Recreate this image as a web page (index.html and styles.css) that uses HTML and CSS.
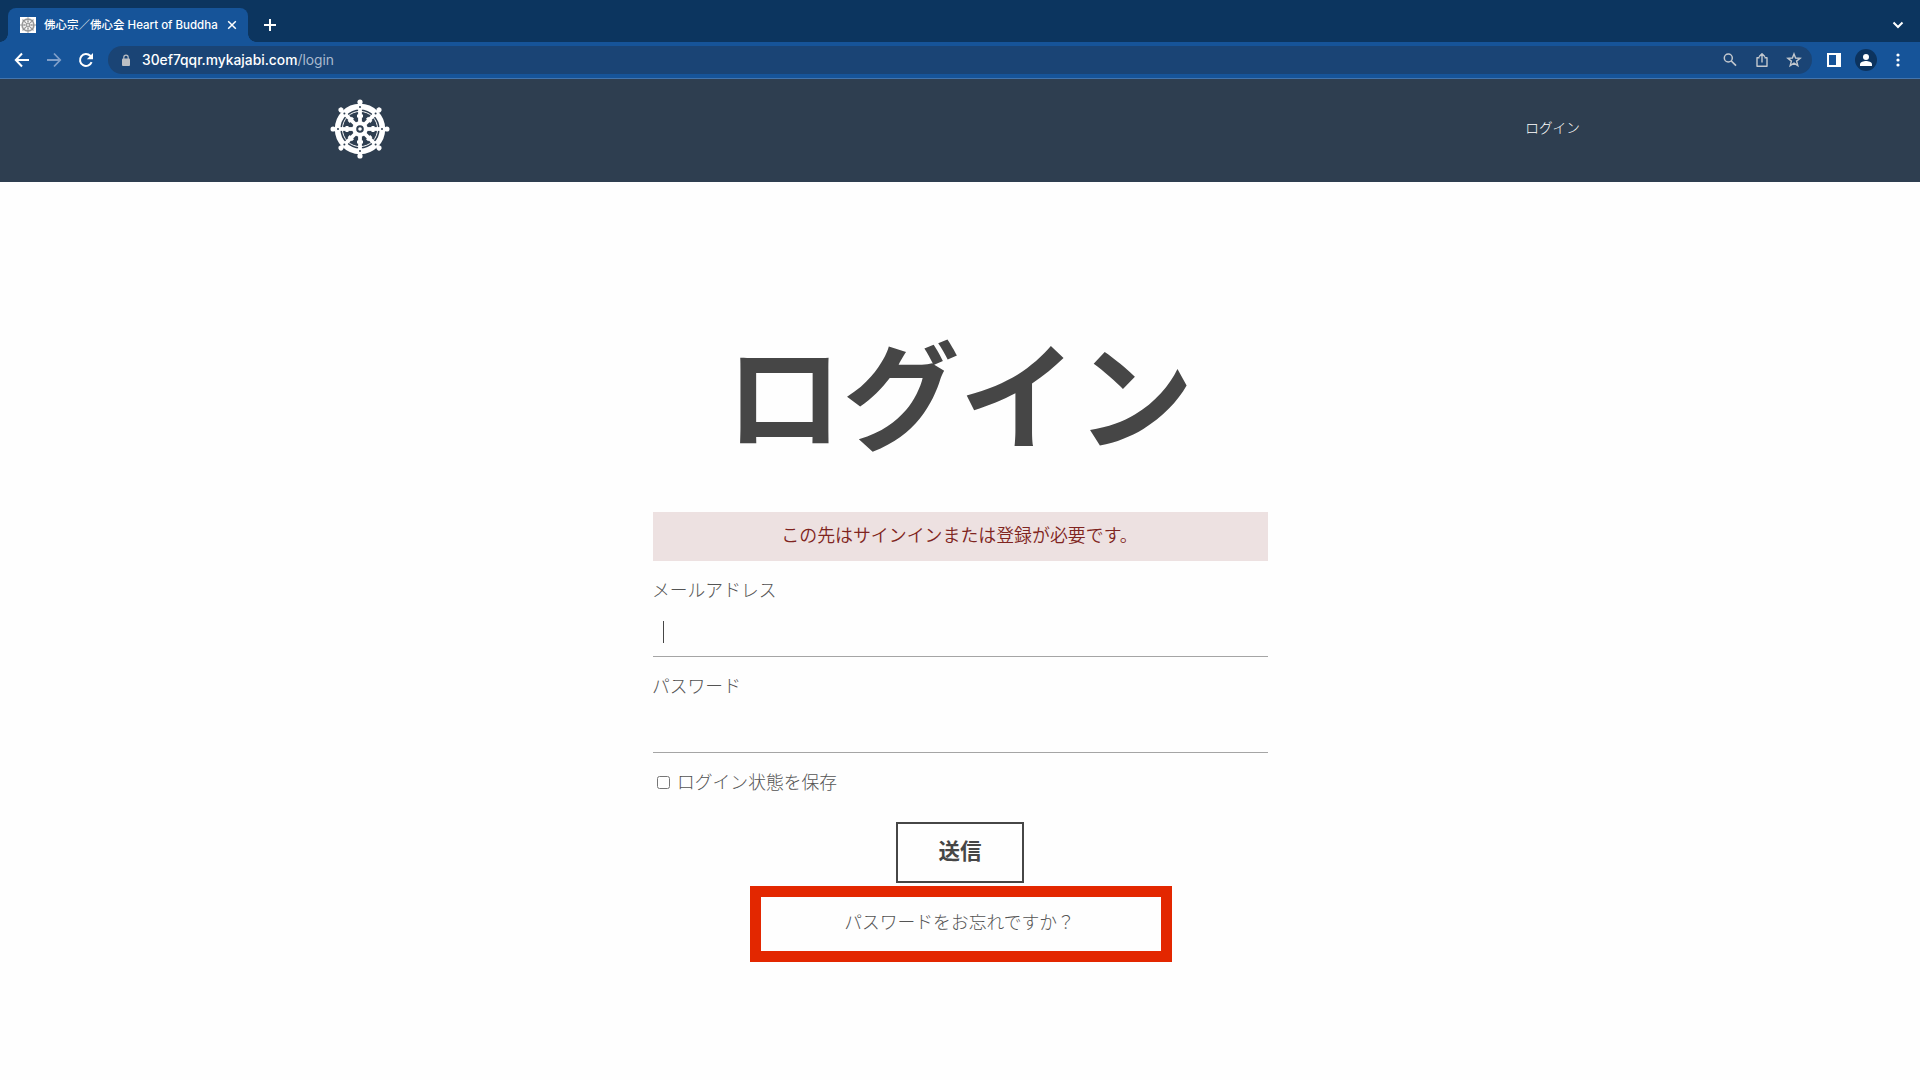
FILE: index.html
```html
<!DOCTYPE html>
<html lang="ja">

<head>
    <meta charset="UTF-8">
    <meta name="viewport" content="width=device-width, initial-scale=1.0">
    <title>佛心宗／佛心会 Heart of Buddha</title>
    <link rel="stylesheet" href="styles.css">
</head>

<body>
    <svg width="0" height="0" class="defs">
        <defs>
            <g id="spoke">
                <path d="M0 -6V-21" stroke-width="3.8" />
                <path d="M-3 -13H3" stroke-width="3" />
                <circle cx="0" cy="-26.9" r="2.6" fill="currentColor" stroke="none" />
            </g>
            <symbol id="wheel" viewBox="-30 -30 60 60">
                <g fill="none" stroke="currentColor">
                    <circle r="22.4" stroke-width="5.6" />
                    <circle r="17.6" stroke-width="1" />
                    <circle r="5.8" stroke-width="4" />
                    <circle r="1.8" fill="currentColor" stroke="none" />
                    <use href="#spoke" />
                    <use href="#spoke" transform="rotate(45)" />
                    <use href="#spoke" transform="rotate(90)" />
                    <use href="#spoke" transform="rotate(135)" />
                    <use href="#spoke" transform="rotate(180)" />
                    <use href="#spoke" transform="rotate(225)" />
                    <use href="#spoke" transform="rotate(270)" />
                    <use href="#spoke" transform="rotate(315)" />
                </g>
                <g class="rivets">
                    <circle cx="0" cy="-22" r="1" />
                    <circle cx="0" cy="22" r="1" />
                    <circle cx="-22" cy="0" r="1" />
                    <circle cx="22" cy="0" r="1" />
                    <circle cx="-15.6" cy="-15.6" r="1" />
                    <circle cx="15.6" cy="-15.6" r="1" />
                    <circle cx="-15.6" cy="15.6" r="1" />
                    <circle cx="15.6" cy="15.6" r="1" />
                </g>
            </symbol>
        </defs>
    </svg>

    <div class="tabstrip">
        <div class="tab">
            <svg class="favicon" width="16" height="16"><use href="#wheel" /></svg>
            <span class="tab-title">佛心宗／佛心会 Heart of Buddha</span>
            <svg class="tab-close" width="10" height="10" viewBox="0 0 10 10"><path d="M1.2 1.2L8.8 8.8M8.8 1.2L1.2 8.8" stroke="#fff" stroke-width="1.5" /></svg>
        </div>
        <svg class="tab-new" width="12" height="12" viewBox="0 0 12 12"><path d="M6 0V12M0 6H12" stroke="#fff" stroke-width="2" /></svg>
        <svg class="tab-menu" width="12" height="8" viewBox="0 0 12 8"><path d="M1.5 1.5L6 6L10.5 1.5" fill="none" stroke="#fff" stroke-width="2" /></svg>
    </div>

    <div class="toolbar">
        <div class="nav-buttons">
            <svg width="16" height="16" viewBox="0 0 16 16"><path d="M15 8H2.5M8 1.5L1.8 8L8 14.5" fill="none" stroke="#fff" stroke-width="2" /></svg>
            <svg width="16" height="16" viewBox="0 0 16 16"><path d="M1 8H13.5M8 1.5L14.2 8L8 14.5" fill="none" stroke="#7f9fc9" stroke-width="1.8" /></svg>
            <svg width="16" height="16" viewBox="0 0 16 16"><path d="M13.6 10.2A6 6 0 1 1 12.3 3.8L13.5 5" fill="none" stroke="#fff" stroke-width="2" /><path d="M15 1V7.2H8.8Z" fill="#fff" /></svg>
        </div>
        <div class="omnibox">
            <svg class="lock" width="10" height="13" viewBox="0 0 10 13"><rect x="1" y="4.5" width="8" height="7.5" rx="1" fill="#bcbfc4" /><path d="M2.8 5V3.4A2.2 2.2 0 0 1 7.2 3.4V5" fill="none" stroke="#bcbfc4" stroke-width="1.2" /></svg>
            <span class="url"><span class="host">30ef7qqr.mykajabi.com</span>/login</span>
            <div class="omnibox-icons">
                <svg width="16" height="16" viewBox="0 0 16 16"><circle cx="6.3" cy="6" r="4" fill="none" stroke="#c3c8ce" stroke-width="1.5" /><path d="M9.3 9L14 13.7" stroke="#c3c8ce" stroke-width="1.7" /></svg>
                <svg width="16" height="16" viewBox="0 0 16 16"><path d="M5.5 5.7H3V14.3H13V5.7H10.5M8 10.5V2M5 4.7L8 1.7L11 4.7" fill="none" stroke="#c3c8ce" stroke-width="1.4" stroke-linejoin="round" /></svg>
                <svg width="16" height="16" viewBox="0 0 16 16"><path d="M8 1.9L9.6 6L14.1 6.3L10.6 9.1L11.8 13.6L8 11.1L4.2 13.6L5.4 9.1L1.9 6.3L6.4 6Z" fill="none" stroke="#c3c8ce" stroke-width="1.4" /></svg>
            </div>
        </div>
        <svg class="panel" width="14" height="14" viewBox="0 0 14 14"><path d="M0 0H14V14H0ZM2 2V12H9V2Z" fill="#fff" fill-rule="evenodd" /></svg>
        <svg class="avatar" width="22" height="22" viewBox="0 0 22 22"><circle cx="11" cy="11" r="11" fill="#0c335e" /><circle cx="11" cy="8" r="3" fill="#fff" /><path d="M5 17V15.3C5 13 8.8 12.1 11 12.1S17 13 17 15.3V17Z" fill="#fff" /></svg>
        <svg class="dots" width="4" height="14" viewBox="0 0 4 14"><circle cx="2" cy="2" r="1.6" fill="#fff" /><circle cx="2" cy="7" r="1.6" fill="#fff" /><circle cx="2" cy="12" r="1.6" fill="#fff" /></svg>
    </div>

    <header class="header">
        <div class="container">
            <svg class="logo" width="60" height="60"><use href="#wheel" /></svg>
            <a href="#" class="header-link">ログイン</a>
        </div>
    </header>

    <main class="auth">
        <h1>ログイン</h1>
        <div class="alert">この先はサインインまたは登録が必要です。</div>
        <form>
            <label for="email">メールアドレス</label>
            <div class="field"><span class="caret"></span><input type="text" id="email"></div>
            <label for="password">パスワード</label>
            <div class="field"><input type="password" id="password"></div>
            <label class="remember"><input type="checkbox"><span>ログイン状態を保存</span></label>
            <button type="button" class="btn">送信</button>
        </form>
        <div class="highlight">
            <a href="#">パスワードをお忘れですか？</a>
        </div>
    </main>
</body>

</html>
```
FILE: styles.css
```css
* {
    box-sizing: border-box;
}

body {
    margin: 0;
    height: 1080px;
    overflow: hidden;
    background-color: #fefefe;
    color: #545454;
    font-family: "Noto Sans CJK JP", sans-serif;
    font-size: 17.8px;
    font-weight: 300;
}

svg {
    display: block;
    flex-shrink: 0;
}

a {
    color: inherit;
    text-decoration: none;
}

.defs {
    position: absolute;
}

/* browser bar */
.tabstrip {
    display: flex;
    align-items: center;
    height: 42px;
    padding: 8px 16px 0 8px;
    background-color: #0c355f;
}

.tab {
    position: relative;
    display: flex;
    align-items: center;
    width: 240px;
    height: 34px;
    padding: 0 11px 0 12px;
    border-radius: 8px 8px 0 0;
    background-color: #165499;
}

.tab::before,
.tab::after {
    content: "";
    position: absolute;
    bottom: 0;
    width: 8px;
    height: 8px;
}

.tab::before {
    left: -8px;
    background: radial-gradient(circle at 0 0, transparent 7.5px, #165499 8px);
}

.tab::after {
    right: -8px;
    background: radial-gradient(circle at 100% 0, transparent 7.5px, #165499 8px);
}

.favicon {
    background-color: #fff;
    color: #999;
}

.tab-title {
    width: 182px;
    padding: 0 0 2px 8px;
    color: #fff;
    font-family: Inter, "Noto Sans CJK JP", sans-serif;
    font-size: 11.5px;
    font-weight: 500;
    white-space: nowrap;
}

.tab-close {
    margin-left: 9px;
}

.tab-new {
    margin-left: 16px;
}

.tab-menu {
    margin-left: auto;
}

.toolbar {
    display: flex;
    align-items: center;
    height: 37px;
    padding: 0 19px 0 14px;
    border-bottom: 1px solid #4375ae;
    background-color: #165499;
}

.nav-buttons {
    display: flex;
    gap: 16px;
}

.omnibox {
    display: flex;
    align-items: center;
    width: 1704px;
    height: 28px;
    margin-left: 14px;
    padding: 0 10px 0 13px;
    border-radius: 14px;
    background-color: #1a4475;
}

.url {
    margin-left: 11px;
    padding-bottom: 1px;
    color: #a9bace;
    font-family: Inter, sans-serif;
    font-size: 13.8px;
    font-weight: 400;
}

.host {
    color: #fff;
    font-weight: 500;
}

.omnibox-icons {
    display: flex;
    gap: 16px;
    margin-left: auto;
}

.panel {
    margin-left: 15px;
}

.avatar {
    margin-left: 14px;
}

.dots {
    margin-left: 19px;
}

/* site header */
.header {
    height: 103px;
    background-color: #2e3e50;
}

.container {
    display: flex;
    align-items: center;
    justify-content: space-between;
    width: 1260px;
    height: 100%;
    margin: 0 auto;
    padding-bottom: 4px;
}

.logo {
    color: #fff;
}

.rivets {
    fill: #2e3e50;
}

.favicon .rivets {
    fill: none;
}

.header-link {
    margin-right: 10px;
    padding-bottom: 3px;
    color: #fff;
    font-size: 13.7px;
    font-weight: 300;
}

/* login form */
.auth {
    margin: 0 652px 0 653px;
    padding-top: 128px;
    text-align: center;
}

h1 {
    margin: 0;
    height: 202px;
    padding-right: 2px;
    color: #464646;
    font-size: 117px;
    font-weight: 700;
    line-height: 160px;
}

.alert {
    height: 49px;
    padding-right: 2px;
    background-color: #ede1e1;
    color: #7f2420;
    font-size: 17.92px;
    font-weight: 350;
    line-height: 44px;
}

form {
    display: flex;
    flex-direction: column;
    align-items: stretch;
    padding-top: 15px;
    text-align: left;
}

label {
    height: 28px;
    margin-left: -1px;
    line-height: 26px;
}

.field {
    display: flex;
    align-items: center;
    height: 53px;
    margin-bottom: 15px;
    padding: 0 10px;
    border-bottom: 1px solid #a5a5a5;
}

.field input {
    flex: 1;
    height: 30px;
    padding: 0;
    border: none;
    outline: none;
    background: none;
}

.caret {
    width: 1px;
    height: 22px;
    margin-top: 4px;
    background-color: #464646;
}

.remember {
    display: flex;
    align-items: center;
}

.remember span {
    padding-bottom: 2px;
}

.remember input {
    width: 13px;
    height: 13px;
    margin: 1px 7px 0 5px;
}

.btn {
    width: 128px;
    height: 61px;
    margin: 26px 0 0 243px;
    padding: 0 0 6px;
    border: 2px solid #464646;
    background: none;
    color: #464646;
    font-family: inherit;
    font-size: 21.5px;
    font-weight: 700;
}

.highlight {
    width: 422px;
    height: 76px;
    margin: 3px 0 0 97px;
    border: 11px solid #e32700;
    line-height: 48px;
}

.highlight a {
    margin-right: 3px;
}
```
